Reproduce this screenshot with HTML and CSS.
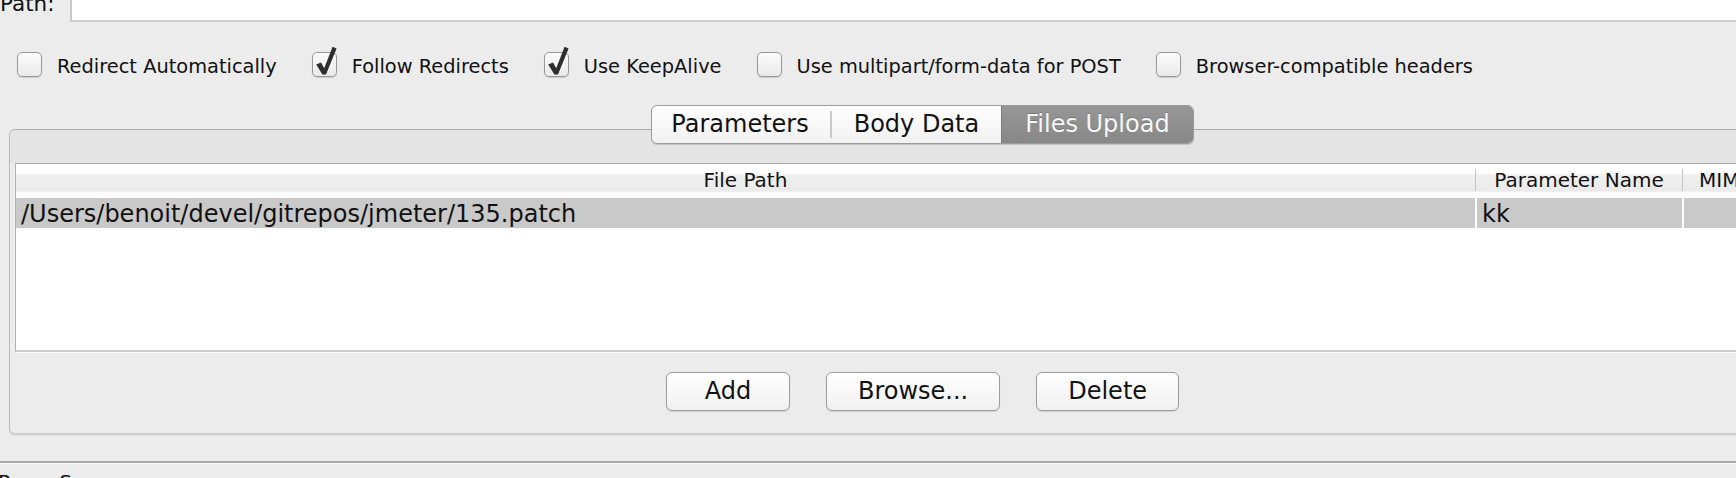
FILE: index.html
```html
<!DOCTYPE html>
<html>
<head>
<meta charset="utf-8">
<link rel="stylesheet" href="styles.css">
</head>
<body>
<div class="page">
  <div class="path-row">
    <span class="path-label">Path:</span>
    <div class="path-field"></div>
  </div>

  <div class="checks">
    <label class="check"><span class="box"></span><span class="check-text">Redirect Automatically</span></label>
    <label class="check"><span class="box checked"><svg class="tick" viewBox="0 0 28 32" width="28" height="32"><path d="M4.2 18.6 L9 16.4 L12.2 22.2 L20.6 0.8 L24.6 2.4 L14 28.6 L10.4 28.6 Z" fill="#2d2d2d"/></svg></span><span class="check-text">Follow Redirects</span></label>
    <label class="check"><span class="box checked"><svg class="tick" viewBox="0 0 28 32" width="28" height="32"><path d="M4.2 18.6 L9 16.4 L12.2 22.2 L20.6 0.8 L24.6 2.4 L14 28.6 L10.4 28.6 Z" fill="#2d2d2d"/></svg></span><span class="check-text">Use KeepAlive</span></label>
    <label class="check"><span class="box"></span><span class="check-text">Use multipart/form-data for POST</span></label>
    <label class="check"><span class="box"></span><span class="check-text">Browser-compatible headers</span></label>
  </div>

  <div class="panel">
    <div class="panel-strip">
      <div class="tabs">
        <div class="tab tab-first">Parameters</div>
        <div class="tab-sep"></div>
        <div class="tab">Body Data</div>
        <div class="tab tab-selected">Files Upload</div>
      </div>
    </div>
    <div class="panel-body">
      <div class="table">
        <div class="thead">
          <div class="th">File Path</div>
          <div class="th th-sep">Parameter Name</div>
          <div class="th th-sep th-last">MIME Type</div>
        </div>
        <div class="tbody">
          <div class="tr">
            <div class="td">/Users/benoit/devel/gitrepos/jmeter/135.patch</div>
            <div class="td">kk</div>
            <div class="td"></div>
          </div>
        </div>
      </div>
      <div class="buttons">
        <button class="btn btn-add">Add</button>
        <button class="btn">Browse...</button>
        <button class="btn">Delete</button>
      </div>
    </div>
  </div>

  <div class="bottom-sep"></div>
  <div class="bottom-title">Proxy Server</div>
</div>
</body>
</html>
```

FILE: styles.css
```css
html, body {
  margin: 0;
  padding: 0;
  background: #ececec;
}

.page {
  width: 1736px;
  height: 478px;
  overflow: hidden;
  background: #ececec;
  font-family: "DejaVu Sans", "Liberation Sans", sans-serif;
  color: #111;
}

/* Path row */
.path-row {
  display: flex;
  align-items: stretch;
  height: 28px;
  margin-top: -6px;
}

.path-label {
  width: 53px;
  text-align: right;
  font-size: 21.5px;
  line-height: 28px;
  margin-top: -4px;
  margin-right: 17px;
  flex: none;
  white-space: nowrap;
}

.path-field {
  flex: 1;
  background: #fff;
  border-left: 2px solid #c8c8c8;
  border-bottom: 2px solid #cdcdcd;
}

/* Checkbox row */
.checks {
  display: flex;
  align-items: center;
  gap: 35px;
  height: 25px;
  margin-top: 30px;
  padding-left: 17px;
}

.check {
  display: flex;
  align-items: center;
  font-size: 19.4px;
  white-space: nowrap;
}

.box {
  position: relative;
  width: 23px;
  height: 23px;
  border: 1px solid #989898;
  border-radius: 5px;
  background: linear-gradient(#fbfbfb, #eaeaea);
  box-shadow: 0 1px 1px rgba(0, 0, 0, 0.14);
  margin-right: 15px;
  flex: none;
}

.tick {
  position: absolute;
  left: -1px;
  top: -7px;
}

.check-text {
  padding-top: 3px;
}

/* Tabbed panel */
.panel {
  width: 1825px;
  margin-top: 52px;
  margin-left: 9px;
  border: 1px solid #bcbcbc;
  border-top-color: #a9a9a9;
  border-bottom: 2px solid #cfcfcf;
  border-radius: 6px;
  background: #ececec;
  box-shadow: 0 1px 1px rgba(0, 0, 0, 0.06);
}

.panel-strip {
  height: 33px;
  background: #e4e4e4;
  border-radius: 6px 6px 0 0;
  display: flex;
  justify-content: center;
  align-items: flex-start;
}

.tabs {
  display: flex;
  align-items: stretch;
  margin-top: -25px;
  height: 39px;
  border: 1px solid #9c9c9c;
  border-radius: 6px;
  background: linear-gradient(#ffffff, #f1f1f1);
  box-shadow: 0 1px 1px rgba(0, 0, 0, 0.15);
  box-sizing: border-box;
  overflow: hidden;
}

.tab {
  font-size: 24px;
  line-height: 37px;
  padding: 0 22px;
  color: #111;
  white-space: nowrap;
}

.tab-first {
  padding-left: 19px;
  padding-right: 21px;
}

.tab-sep {
  width: 2px;
  background: #c8c8c8;
  margin: 5px 0 5px;
}

.tab-selected {
  background: linear-gradient(#979797, #878787);
  color: #f7f7f7;
  text-shadow: 0 -1px 0 rgba(0, 0, 0, 0.2);
  border-left: 1px solid #7d7d7d;
  padding: 0 23px 0 23px;
}

.panel-body {
  padding: 0 5px;
}

/* Table */
.table {
  border-top: 1px solid #a8a8a8;
  border-left: 1px solid #b0b0b0;
  border-bottom: 2px solid #cccccc;
  background: #fff;
  box-shadow: 0 1px 0 #ffffff;
}

.thead {
  display: grid;
  grid-template-columns: 1459px 205px 1fr;
  column-gap: 2px;
  height: 32px;
  background: linear-gradient(#ffffff 0, #ffffff 9px, #efefef 11px, #ebebeb 27px, #ffffff 29px, #ffffff 32px);
}

.th {
  font-size: 20px;
  line-height: 22px;
  margin-top: 5px;
  height: 22px;
  text-align: center;
  white-space: nowrap;
  color: #111;
}

.th-sep {
  border-left: 1px solid #c4c4c4;
  margin-left: -2px;
}

.th-last {
  text-align: left;
  padding-left: 16px;
}

.tbody {
  height: 154px;
  padding-top: 2px;
  box-sizing: border-box;
}

.tr {
  display: grid;
  grid-template-columns: 1459px 205px 1fr;
  column-gap: 2px;
  height: 30px;
}

.td {
  background: #c9c9c9;
  font-size: 24px;
  line-height: 30px;
  padding-left: 5px;
  padding-top: 1px;
  box-sizing: border-box;
  white-space: nowrap;
  overflow: hidden;
  color: #111;
}

/* Buttons */
.buttons {
  display: flex;
  justify-content: center;
  gap: 36px;
  margin-top: 20px;
  padding-bottom: 22px;
}

.btn {
  font-family: "DejaVu Sans", "Liberation Sans", sans-serif;
  font-size: 24px;
  line-height: 37px;
  height: 39px;
  padding: 0 31px;
  min-width: 124px;
  border: 1px solid #9c9c9c;
  border-radius: 6px;
  background: linear-gradient(#ffffff, #f0f0f0);
  box-shadow: 0 1px 1px rgba(0, 0, 0, 0.12);
  color: #111;
  box-sizing: border-box;
}

/* Bottom */
.bottom-sep {
  margin-top: 26px;
  border-top: 2px solid #a8a8a8;
  border-bottom: 1px solid #fafafa;
}

.bottom-title {
  font-size: 20px;
  line-height: 24px;
  margin-top: 6px;
  margin-left: -2px;
  color: #111;
}
```
